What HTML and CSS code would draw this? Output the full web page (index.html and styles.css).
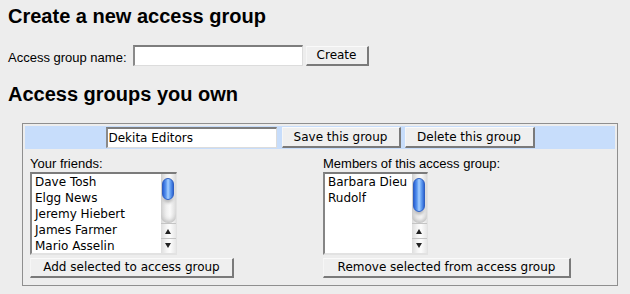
FILE: index.html
```html
<!DOCTYPE html>
<html lang="en">

<head>
    <meta charset="UTF-8">
    <title>Access groups</title>
    <link rel="stylesheet" href="styles.css">
</head>

<body>
    <h1 class="page-title">Create a new access group</h1>

    <form class="create-row">
        <label class="field-label">Access group name:</label>
        <input class="text-field create-name" type="text">
        <button class="btn create-btn" type="button">Create</button>
    </form>

    <h2 class="page-title section-title">Access groups you own</h2>

    <div class="group-box">
        <!-- group name + actions -->
        <div class="group-bar">
            <input class="text-field group-name" type="text" value="Dekita Editors">
            <button class="btn bar-btn save-btn" type="button">Save this group</button>
            <button class="btn bar-btn delete-btn" type="button">Delete this group</button>
        </div>

        <div class="group-cols">
            <!-- friends -->
            <div class="col">
                <div class="col-label">Your friends:</div>
                <div class="listbox friends-list">
                    <div class="list-items">
                        <div>Dave Tosh</div>
                        <div>Elgg News</div>
                        <div>Jeremy Hiebert</div>
                        <div>James Farmer</div>
                        <div>Mario Asselin</div>
                    </div>
                    <div class="scrollbar">
                        <div class="track">
                            <div class="thumb"></div>
                        </div>
                        <div class="arrow arrow-up"></div>
                        <div class="arrow arrow-down"></div>
                    </div>
                </div>
                <button class="btn list-btn add-btn" type="button">Add selected to access group</button>
            </div>

            <!-- members -->
            <div class="col">
                <div class="col-label">Members of this access group:</div>
                <div class="listbox members-list">
                    <div class="list-items">
                        <div>Barbara Dieu</div>
                        <div>Rudolf</div>
                    </div>
                    <div class="scrollbar">
                        <div class="track">
                            <div class="thumb thumb-long"></div>
                        </div>
                        <div class="arrow arrow-up"></div>
                        <div class="arrow arrow-down"></div>
                    </div>
                </div>
                <button class="btn list-btn remove-btn" type="button">Remove selected from access group</button>
            </div>
        </div>
    </div>
</body>
</html>
```

FILE: styles.css
```css
body {
    background: #ededed;
    color: #000;
    font-family: 'Liberation Sans', Arial, sans-serif;
    margin: 0;
    padding: 5px 8px 0 8px;
}

.page-title {
    font-size: 20px;
    font-weight: bold;
    line-height: 22px;
    margin: 0;
}

.section-title {
    margin-top: 17px;
}

/* create row */
.create-row {
    display: flex;
    align-items: center;
    margin: 18px 0 0 0;
    height: 21px;
}

.field-label {
    font-size: 13px;
    line-height: 15px;
    padding-top: 4px;
    margin-right: 6px;
}

.text-field {
    box-sizing: border-box;
    height: 21px;
    margin: 0;
    padding: 0 1px;
    background: #fff;
    border: 1px solid;
    border-width: 2px 1px 1px 2px;
    border-color: #7d7d7d #dcdcdc #dcdcdc #8a8a8a;
    font-family: 'DejaVu Sans', sans-serif;
    font-size: 12px;
    color: #000;
    outline: none;
}

.create-name {
    width: 170px;
}

.btn {
    box-sizing: border-box;
    margin: 0;
    padding: 0 8px;
    background: #efefef;
    border: 1px solid;
    border-width: 1px 2px 2px 1px;
    border-color: #fafafa #7a7a7a #7a7a7a #f6f6f6;
    font-family: 'DejaVu Sans', sans-serif;
    font-size: 12px;
    color: #000;
    line-height: 15px;
}

.create-btn {
    height: 20px;
    width: 63px;
    margin-left: 3px;
}

/* group box */
.group-box {
    box-sizing: border-box;
    width: 596px;
    margin: 18px 0 0 14px;
    border: 1px solid #8f8f8f;
    padding: 2px;
}

.group-bar {
    display: flex;
    justify-content: center;
    align-items: center;
    gap: 4px;
    height: 23px;
    background: #c7ddfb;
}

.group-name {
    width: 171px;
    margin-right: 1px;
}

.bar-btn {
    height: 21px;
}

.save-btn {
    width: 119px;
}

.delete-btn {
    width: 130px;
}

.group-cols {
    display: grid;
    grid-template-columns: 293px 1fr;
    padding: 7px 5px 5px 5px;
}

.col-label {
    font-size: 13px;
    line-height: 15px;
}

/* fake select boxes */
.listbox {
    box-sizing: border-box;
    display: flex;
    height: 83px;
    margin-top: 1px;
    background: #fff;
    border: 1px solid;
    border-width: 2px 1px 2px 2px;
    border-color: #7b7b7b #e2e2e2 #e2e2e2 #858585;
}

.friends-list {
    width: 147px;
}

.members-list {
    width: 105px;
}

.list-items {
    flex: 1;
    padding: 0 0 0 3px;
    font-family: 'DejaVu Sans', sans-serif;
    font-size: 12px;
    line-height: 16px;
    white-space: nowrap;
    overflow: hidden;
}

.scrollbar {
    width: 15px;
    display: flex;
    flex-direction: column;
    background: linear-gradient(to right, #d9d9d9, #f2f2f2 35%, #fdfdfd 65%, #e3e3e3);
}

.track {
    flex: 1;
    padding: 4px 0 0 1px;
    background: linear-gradient(to right, #cfcfcf, #efefef 35%, #fafafa 60%, #dadada);
    border-radius: 0 0 7px 7px;
    box-shadow: inset 0 -6px 5px -4px #b9b9b9;
}

.thumb {
    box-sizing: border-box;
    width: 12px;
    height: 22px;
    border-radius: 6px;
    border: 1px solid #2f5fc0;
    background: linear-gradient(to right, #2a62d6, #5c98f0 30%, #a8d0ff 50%, #6aa6f5 70%, #2e66d4);
    box-shadow: 0 4px 3px -1px #bdbdbd;
}

.thumb-long {
    height: 34px;
}

.arrow {
    position: relative;
    height: 15px;
    background: linear-gradient(to right, #dedede, #f6f6f6 40%, #fcfcfc 60%, #e6e6e6);
    border-top: 1px solid #c4c4c4;
    box-sizing: border-box;
}

.arrow::after {
    content: "";
    position: absolute;
    left: 4px;
    top: 5px;
    border-left: 3px solid transparent;
    border-right: 3px solid transparent;
}

.arrow-up::after {
    border-bottom: 5px solid #222;
}

.arrow-down::after {
    top: 4px;
    border-top: 5px solid #222;
}

.list-btn {
    height: 20px;
    margin-top: 3px;
    padding: 0;
}

.add-btn {
    width: 204px;
}

.remove-btn {
    width: 248px;
}
```
